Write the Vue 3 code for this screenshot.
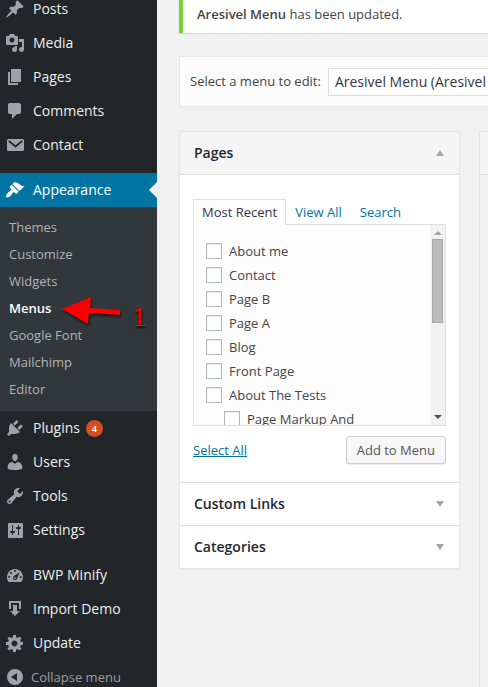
<script setup>
import { ref } from 'vue'

const icons = {
  post: 'M10.44 3.02l1.82-1.82 6.36 6.35-1.83 1.82c-1.05-.68-2.48-.57-3.41.36l-.75.75c-.92.93-1.04 2.35-.35 3.41l-1.83 1.82-2.41-2.41-2.8 2.79c-.42.42-3.38 2.71-3.8 2.29s1.86-3.39 2.28-3.81l2.79-2.79L4.1 9.36l1.83-1.82c1.05.69 2.48.57 3.4-.36l.75-.75c.93-.92 1.05-2.35.36-3.41z',
  media: 'M13 11V4c0-.55-.45-1-1-1h-1.67L9 1H5L3.67 3H2c-.55 0-1 .45-1 1v7c0 .55.45 1 1 1h10c.55 0 1-.45 1-1zM7 4.5c1.38 0 2.5 1.12 2.5 2.5S8.38 9.5 7 9.5 4.5 8.38 4.5 7 5.62 4.5 7 4.5zM14 6h5v10.5c0 1.38-1.12 2.5-2.5 2.5S14 17.88 14 16.5s1.12-2.5 2.5-2.5c.17 0 .34.02.5.05V9h-3V6zm-4 8.05V13h2v3.5c0 1.38-1.12 2.5-2.5 2.5S7 17.88 7 16.5 8.12 14 9.5 14c.17 0 .34.02.5.05z',
  page: 'M6 15V2h10v13H6zm-1 1h8v2H3V5h2v11z',
  comment: 'M5 2h9c1.1 0 2 .9 2 2v7c0 1.1-.9 2-2 2h-2l-5 5v-5H5c-1.1 0-2-.9-2-2V4c0-1.1.9-2 2-2z',
  mail: 'M3.5 4h14c.83 0 1.5.67 1.5 1.5v9c0 .83-.67 1.5-1.5 1.5h-14c-.83 0-1.5-.67-1.5-1.5v-9C2 4.67 2.67 4 3.5 4zM4.3 5.3L3.2 6.6l7.3 6.1 7.3-6.1-1.1-1.3-6.2 5z',
  brush: 'M14.48 11.06L7.41 3.99l1.5-1.5c.5-.56 2.3-.47 3.51.32 1.21.8 1.43 1.28 2.91 2.1 1.18.64 2.45 1.26 4.45.85zm-.71.71L6.7 4.7 4.93 6.47c-.39.39-.39 1.02 0 1.41l1.06 1.06c.39.39.39 1.03 0 1.42-.6.6-1.43 1.11-2.21 1.69-.35.26-.7.53-1.01.84C1.43 14.23.4 16.08 1.4 17.07c.99 1 2.84-.03 4.18-1.36.31-.31.58-.66.85-1.02.57-.78 1.08-1.61 1.69-2.21.39-.39 1.02-.39 1.41 0l1.06 1.06c.39.39 1.02.39 1.41 0z',
  plug: 'M13.11 4.36L9.87 7.6 8 5.73l3.24-3.24c.35-.34 1.05-.2 1.56.32.52.51.66 1.21.31 1.55zm-8 1.77l.91-1.12 9.01 9.01-1.19.84c-.71.71-2.63 1.16-3.82 1.16H6.14L4.9 17.26c-.59.59-1.54.59-2.12 0-.59-.58-.59-1.53 0-2.12l1.24-1.24v-3.88c0-1.13.4-3.19 1.09-3.89zm7.26 3.97l3.24-3.24c.34-.35 1.04-.21 1.55.31.52.51.66 1.21.31 1.55l-3.24 3.25z',
  user: 'M10 9.25c-2.27 0-2.73-3.44-2.73-3.44C7 4.02 7.82 2 9.97 2c2.16 0 2.98 2.02 2.71 3.81 0 0-.41 3.44-2.68 3.44zm0 2.57L12.72 10c2.39 0 4.52 2.33 4.52 4.53v2.49s-3.65 1.13-7.24 1.13c-3.65 0-7.24-1.13-7.24-1.13v-2.49c0-2.25 1.94-4.48 4.47-4.48z',
  wrench: 'M16.68 9.77c-1.34 1.34-3.3 1.67-4.95.99l-5.41 6.52c-.99.99-2.59.99-3.58 0s-.99-2.59 0-3.57l6.52-5.42c-.68-1.65-.35-3.61.99-4.95 1.28-1.28 3.12-1.62 4.72-1.06l-2.89 2.89 2.82 2.82 2.86-2.87c.53 1.58.18 3.39-1.08 4.65zM3.81 16.21c.4.39 1.04.39 1.43 0 .4-.4.4-1.04 0-1.43-.39-.4-1.03-.4-1.43 0-.39.39-.39 1.03 0 1.43z',
  sliders: 'M18 17V4c0-.55-.45-1-1-1H4c-.55 0-1 .45-1 1v13c0 .55.45 1 1 1h13c.55 0 1-.45 1-1zM8 11h1c.55 0 1 .45 1 1s-.45 1-1 1H8v2h-1v-2H6c-.55 0-1-.45-1-1s.45-1 1-1h1V5h1zm5-2h-1c-.55 0-1-.45-1-1s.45-1 1-1h1V5h1v2h1c.55 0 1 .45 1 1s-.45 1-1 1h-1v6h-1z',
  gauge: 'M3.76 17h12.48c1.1-1.37 1.76-3.11 1.76-5 0-4.42-3.58-8-8-8s-8 3.58-8 8c0 1.89.66 3.63 1.76 5zM10 5a1 1 0 110 2 1 1 0 010-2zM6 7a1 1 0 110 2 1 1 0 010-2zM4.2 11a1 1 0 110 2 1 1 0 010-2zM15.8 11a1 1 0 110 2 1 1 0 010-2zM14.6 7.2l-2.6 6.6a2.1 2.1 0 11-2.9-2.7zM10 12.2a.9.9 0 100 1.8.9.9 0 000-1.8z',
  importer: 'M4 2h12v8h-2V4H6v6H4zM8 6h4v6h3l-5 5-5-5h3z',
  gear: 'M18 12h-2.18c-.17.7-.44 1.35-.81 1.93l1.54 1.54-2.1 2.1-1.54-1.54c-.58.36-1.23.63-1.91.79V19H8v-2.18c-.68-.16-1.33-.43-1.91-.79l-1.54 1.54-2.12-2.12 1.54-1.54c-.36-.58-.63-1.23-.79-1.91H1V9.03h2.17c.16-.7.44-1.35.8-1.94L2.43 5.55l2.1-2.1 1.54 1.54c.58-.37 1.24-.64 1.93-.81V2h3v2.18c.68.16 1.33.43 1.91.79l1.54-1.54 2.12 2.12-1.54 1.54c.36.59.64 1.24.8 1.94H18V12zm-8.5 1.5c1.66 0 3-1.34 3-3s-1.34-3-3-3-3 1.34-3 3 1.34 3 3 3z',
  collapse: 'M10 2a8 8 0 110 16 8 8 0 010-16zM12 6l-6 4 6 4z'
}

const groups = [
  [
    { label: 'Posts', icon: 'post' },
    { label: 'Media', icon: 'media' },
    { label: 'Pages', icon: 'page' },
    { label: 'Comments', icon: 'comment' },
    { label: 'Contact', icon: 'mail' }
  ],
  [
    {
      label: 'Appearance',
      icon: 'brush',
      children: ['Themes', 'Customize', 'Widgets', 'Menus', 'Google Font', 'Mailchimp', 'Editor']
    },
    { label: 'Plugins', icon: 'plug', count: 4 },
    { label: 'Users', icon: 'user' },
    { label: 'Tools', icon: 'wrench' },
    { label: 'Settings', icon: 'sliders' }
  ],
  [
    { label: 'BWP Minify', icon: 'gauge' },
    { label: 'Import Demo', icon: 'importer' },
    { label: 'Update', icon: 'gear' }
  ]
]

const pages = ref([
  { label: 'About me', checked: false },
  { label: 'Contact', checked: false },
  { label: 'Page B', checked: false },
  { label: 'Page A', checked: false },
  { label: 'Blog', checked: false },
  { label: 'Front Page', checked: false },
  { label: 'About The Tests', checked: false },
  { label: 'Page Markup And', checked: false, nested: true }
])

const selectAll = () => pages.value.forEach((p) => { p.checked = true })
</script>

<template>
  <div class="admin">
    <nav class="sidebar">
      <ul v-for="(group, g) in groups" :key="g" class="group">
        <li v-for="item in group" :key="item.label">
          <a href="#" class="item" :class="{ current: item.children }">
            <svg class="icon" viewBox="0 0 20 20"><path :d="icons[item.icon]" fill-rule="evenodd" /></svg>
            <span>{{ item.label }}</span>
            <span v-if="item.count" class="count">{{ item.count }}</span>
          </a>
          <ul v-if="item.children" class="submenu">
            <li v-for="child in item.children" :key="child">
              <a href="#" :class="{ active: child === 'Menus' }">{{ child }}</a>
              <div v-if="child === 'Menus'" class="pointer">
                <svg viewBox="0 0 64 34" width="64" height="34">
                  <path d="M2 14L31 2l-1 11 30 2v5l-31-2-1 11z" />
                </svg>
                <span>1</span>
              </div>
            </li>
          </ul>
        </li>
      </ul>
      <button type="button" class="item collapse">
        <svg class="icon" viewBox="0 0 20 20"><path :d="icons.collapse" fill-rule="evenodd" /></svg>
        <span>Collapse menu</span>
      </button>
    </nav>

    <main class="content">
      <p class="notice"><strong>Aresivel Menu</strong> has been updated.</p>

      <form class="picker" @submit.prevent>
        <label for="menu">Select a menu to edit:</label>
        <select id="menu"><option>Aresivel Menu (Aresivel</option></select>
      </form>

      <div class="columns">
        <div class="accordion">
          <section>
            <h3 class="heading open"><button type="button">Pages<i class="caret up"></i></button></h3>
            <div class="body">
              <div class="tabs">
                <a href="#" class="selected">Most Recent</a>
                <a href="#">View All</a>
                <a href="#">Search</a>
              </div>
              <div class="list">
                <div class="options">
                  <label v-for="page in pages" :key="page.label" :class="{ nested: page.nested }">
                    <input v-model="page.checked" type="checkbox">
                    {{ page.label }}
                  </label>
                </div>
                <div class="scrollbar">
                  <i class="step up"></i>
                  <div class="track"><div class="thumb"></div></div>
                  <i class="step down"></i>
                </div>
              </div>
              <div class="actions">
                <a href="#" @click.prevent="selectAll">Select All</a>
                <button type="button">Add to Menu</button>
              </div>
            </div>
          </section>
          <section><h3 class="heading"><button type="button">Custom Links<i class="caret down"></i></button></h3></section>
          <section><h3 class="heading"><button type="button">Categories<i class="caret down"></i></button></h3></section>
        </div>
        <div class="editor"><div class="editor-head"></div></div>
      </div>
    </main>
  </div>
</template>

<style>
body {
  margin: 0;
  background: #f1f1f1;
}
</style>

<style scoped>
* {
  box-sizing: border-box;
}
.admin {
  display: flex;
  height: 100vh;
  overflow: hidden;
  color: #444;
  font: 13px/18px "Open Sans", sans-serif;
}
ul {
  margin: 0;
  padding: 0;
  list-style: none;
}
a {
  color: #0074a2;
  text-decoration: none;
}
button {
  font: inherit;
  cursor: pointer;
}

/* Sidebar, scrolled a little past its first entry */
.sidebar {
  flex: none;
  width: 157px;
  margin-top: -8px;
  background: #222629;
}
.group + .group {
  margin-top: 11px;
}
.item {
  position: relative;
  display: flex;
  align-items: center;
  gap: 8px;
  width: 100%;
  height: 34px;
  padding: 0 5px;
  border: 0;
  background: none;
  color: #eee;
  font-size: 14px;
  white-space: nowrap;
}
.icon {
  flex: none;
  width: 20px;
  height: 20px;
  fill: #9ea3a8;
}
.item.current {
  background: #0074a2;
  color: #fff;
}
.item.current .icon {
  fill: #fff;
}
.item.current::after {
  content: "";
  position: absolute;
  right: 0;
  top: 9px;
  border: 8px solid transparent;
  border-left: 0;
  border-right-color: #f1f1f1;
}
.count {
  width: 17px;
  height: 17px;
  margin-left: -2px;
  border-radius: 50%;
  background: #d54e21;
  color: #fff;
  font-size: 9px;
  font-weight: 600;
  line-height: 17px;
  text-align: center;
}
.submenu {
  padding: 7px 0 8px;
  background: #32373b;
}
.submenu li {
  position: relative;
}
.submenu a {
  display: block;
  padding: 0 9px;
  color: #b0b3b5;
  line-height: 27px;
}
.submenu a.active {
  color: #fff;
  font-weight: 600;
}
.collapse {
  gap: 6px;
  color: #9a9ea2;
  font-size: 13px;
}
.pointer {
  position: absolute;
  left: 60px;
  top: 0;
  display: flex;
  gap: 8px;
  color: #fa0000;
  font: 28px/44px "Liberation Serif", serif;
  text-shadow: 1px 2px 2px #000;
}
.pointer svg {
  fill: #fa0000;
  filter: drop-shadow(1px 2px 1px #0009);
}

/* Content */
.content {
  flex: 1;
  display: flex;
  flex-direction: column;
  min-width: 0;
  padding-left: 22px;
}
.notice {
  margin: 0 0 23px;
  padding: 5px 14px 10px;
  border-left: 4px solid #7ad03a;
  background: #fff;
  box-shadow: 0 1px 1px #0000001a;
}
strong {
  font-weight: 600;
}
.picker {
  display: flex;
  align-items: center;
  gap: 7px;
  height: 51px;
  margin-bottom: 24px;
  padding-left: 10px;
  border: 1px solid #e5e5e5;
  border-right: 0;
  background: #fbfbfb;
  white-space: nowrap;
}
.picker label {
  padding-bottom: 2px;
}
.picker select {
  appearance: none;
  flex: 1;
  min-width: 0;
  height: 28px;
  padding: 0 0 0 6px;
  border: 1px solid #ddd;
  border-right: 0;
  border-radius: 0;
  background: #fff;
  color: #32373c;
  font: 14px "Open Sans", sans-serif;
}
.columns {
  flex: 1;
  display: flex;
  align-items: flex-start;
  gap: 19px;
}
.accordion {
  flex: none;
  width: 281px;
  border: 1px solid #e5e5e5;
  background: #fff;
  box-shadow: 0 1px 1px #0000000a;
}
.editor {
  flex: 1;
  align-self: stretch;
  border: 1px solid #e5e5e5;
  border-width: 1px 0 0 1px;
}
.editor-head {
  height: 43px;
  border-bottom: 1px solid #dfdfdf;
  background: #f5f5f5;
}
section + section {
  border-top: 1px solid #dfdfdf;
}
.heading {
  margin: 0;
}
.heading button {
  display: flex;
  align-items: center;
  justify-content: space-between;
  width: 100%;
  height: 42px;
  padding: 0 14px;
  border: 0;
  background: none;
  color: #23282d;
  font-size: 14px;
  font-weight: 600;
}
.heading.open {
  border-bottom: 1px solid #dfdfdf;
  background: #f5f5f5;
}
.caret {
  margin-right: 1px;
  border: 4px solid transparent;
}
.caret.up {
  border-top: 0;
  border-bottom: 6px solid #a0a5aa;
}
.caret.down {
  border-bottom: 0;
  border-top: 6px solid #a0a5aa;
}
.body {
  padding: 24px 13px 18px;
}
.tabs {
  display: flex;
}
.tabs a {
  margin-bottom: -1px;
  padding: 3px 8px 4px;
  border: 1px solid transparent;
  border-bottom: 0;
}
.tabs .selected {
  z-index: 1;
  border-color: #dfdfdf;
  background: #fdfdfd;
  color: #32373c;
}
.list {
  display: flex;
  height: 202px;
  overflow: hidden;
  border: 1px solid #dfdfdf;
  background: #fdfdfd;
}
.options {
  flex: 1;
  padding: 14px 12px 0;
}
.options label {
  display: flex;
  align-items: center;
  gap: 7px;
  height: 24px;
}
.options .nested {
  margin-left: 18px;
}
.options input {
  appearance: none;
  width: 16px;
  height: 16px;
  margin: 0;
  border: 1px solid #b4b9be;
  background: #fff;
  box-shadow: inset 0 1px 2px #0000001a;
}
.options input:checked {
  background: #1e8cbe;
}
.scrollbar {
  display: flex;
  flex-direction: column;
  align-items: center;
  width: 15px;
  padding: 6px 0;
  background: #f1f1f1;
}
.step {
  border: 4px solid transparent;
}
.step.up {
  border-top: 0;
  border-bottom-color: #a3a3a3;
}
.step.down {
  border-bottom: 0;
  border-top-color: #505050;
}
.track {
  flex: 1;
  padding-top: 4px;
}
.thumb {
  width: 11px;
  height: 84px;
  border: 1px solid #a8a8a8;
  background: #bcbcbc;
}
.actions {
  display: flex;
  align-items: center;
  justify-content: space-between;
  margin-top: 10px;
}
.actions a {
  text-decoration: underline;
}
.actions button {
  height: 28px;
  padding: 0 10px;
  border: 1px solid #ccc;
  border-radius: 3px;
  background: #f7f7f7;
  box-shadow: inset 0 1px 0 #fff, 0 1px 0 #00000014;
  color: #555;
}
</style>
